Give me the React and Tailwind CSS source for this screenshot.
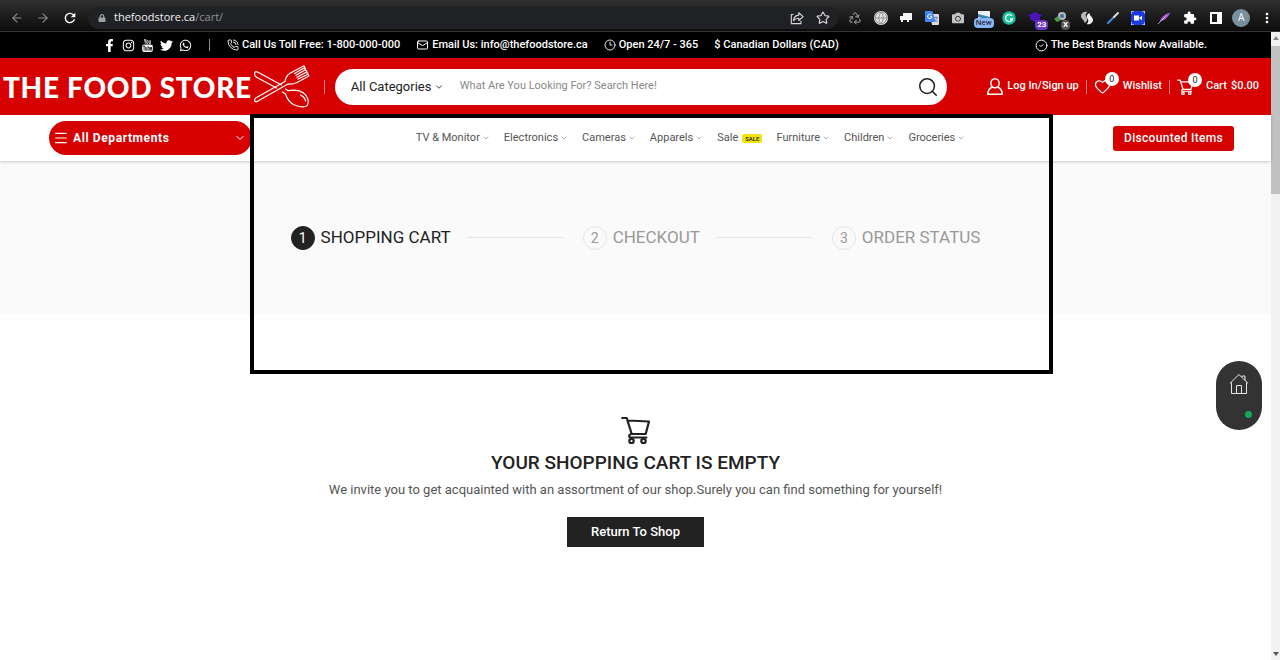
import {
  ArrowLeft,
  ArrowRight,
  ChevronDown,
  CircleCheck,
  Clock3,
  Globe,
  Heart,
  Mail,
  Menu,
  PhoneCall,
  Recycle,
  Search,
  Star,
} from "lucide-react";
import { FaCamera, FaFacebookF, FaInstagram, FaLock, FaTwitter, FaWhatsapp } from "react-icons/fa";
import { MdExtension, MdMoreVert, MdRefresh } from "react-icons/md";
import { TfiYoutube } from "react-icons/tfi";

const SOCIALS = [
  { label: "Facebook", Icon: FaFacebookF },
  { label: "Instagram", Icon: FaInstagram },
  { label: "YouTube", Icon: TfiYoutube },
  { label: "Twitter", Icon: FaTwitter },
  { label: "WhatsApp", Icon: FaWhatsapp },
];

const MENU = [
  { label: "TV & Monitor" },
  { label: "Electronics" },
  { label: "Cameras" },
  { label: "Apparels" },
  { label: "Sale", badge: "SALE" },
  { label: "Furniture" },
  { label: "Children" },
  { label: "Groceries" },
];

const STEPS = ["SHOPPING CART", "CHECKOUT", "ORDER STATUS"];

function ShareIcon() {
  return (
    <svg viewBox="0 0 16 16" className="w-3.5 h-3.5" fill="none" stroke="currentColor" strokeWidth="1.3" strokeLinejoin="round">
      <path d="M4 4H1.5v10.5h11V11" />
      <path d="M10 2l5 4.5-5 4.300V8.300C7.500 8.300 5.500 9 4 11c.3-3.500 2.500-6 6-6.300z" />
    </svg>
  );
}

function CartIcon({ className }) {
  return (
    <svg viewBox="0 0 30 28" className={className} fill="none" stroke="currentColor" strokeWidth="2.2" strokeLinecap="round" strokeLinejoin="round">
      <path d="M1.200 2h4.500l5 16h14L28 5.500 7 4.500" />
      <path d="M10.700 18c-3 0-3.500 3.500-.7 3.500h15.500" />
      <circle cx="10.500" cy="25" r="2.200" />
      <circle cx="22.500" cy="25" r="2.200" />
    </svg>
  );
}

function UserIcon() {
  return (
    <svg viewBox="0 0 16 17" className="w-4 h-[17px]" fill="none" stroke="currentColor" strokeWidth="1.500" strokeLinejoin="round">
      <ellipse cx="8" cy="5.300" rx="4.200" ry="4.500" />
      <path d="M5.500 9C2.500 10.300.8 12.500.8 16.200h14.400c0-3.700-1.700-5.900-4.700-7.200" />
    </svg>
  );
}

function HouseIcon() {
  return (
    <svg viewBox="0 0 20 22" className="w-5 h-[22px]" fill="none" stroke="#e8e8e8" strokeWidth="1">
      <path d="M.8 10.500L10 1.500l9.200 9" />
      <path d="M2.500 9.500v11h15v-11" />
      <path d="M7.500 20.500v-8h5v8M13 4V3h3v4.500" />
    </svg>
  );
}

// Knife-and-spoon mark beside the store name
function CutleryIcon() {
  return (
    <svg viewBox="0 0 56 44" className="w-14 h-11 shrink-0" fill="none" stroke="#fff" strokeWidth="1.200" strokeLinejoin="round" strokeLinecap="round">
      <path d="M22.500 23L3 12.500C1 11.500.3 9 .8 7.500 1.500 6 3 6.700 4 7.300L27.500 20" />
      <path d="M.8 34.500c-.5 2 .7 3 2.700 1.800L34 19c3 .3 6 0 9-1.500l11-6c1.500-1 .5-2.500-1-1.800L44 14M31 16.500L2.500 32.500C1.500 33 1 33.500.8 34.500M31 16.500c.5-3.500 2-6.500 5-8.300l13-7c1.400-.7 2.300.8 1 1.700L40.500 8.500M50 3.200c1.400-.5 2.200 1 .9 1.800L42 10.300M51.200 5.500c1.400-.5 2.200 1 .9 1.800L43 12.300M52.200 7.700c1.400-.5 2.200 1 .9 1.800" />
      <path d="M28.500 27l3 2c1.500 5 4.500 9 9 11 5 2.300 11.500 2.500 13 0 1.800-3.500.5-8.500-4-12-4.500-3.300-10.500-3.300-15.500-2.300l-2.500-1.700" />
      <path d="M46.500 30c3 1.500 4.700 3.500 5 6" />
    </svg>
  );
}

function SwirlIcon() {
  return (
    <svg viewBox="0 0 14 14" className="w-3.5 h-3.5">
      <path d="M7.500 1C4 0 1 2.200 1 5c0 3.500 3.500 3.500 3.500 7 2.500-1 3.500-3.500 2-5.700C5 4.500 5.500 2.300 7.500 1z" fill="#b9b9b9" />
      <path d="M6.500 13c3.500 1 6.500-1.200 6.500-4 0-3.500-3.500-3.500-3.500-7C7 3 6 5.500 7.500 7.700c1.500 1.800 1 4-1 5.300z" fill="#f1f1f1" />
    </svg>
  );
}

function TranslateIcon() {
  return (
    <svg viewBox="0 0 14 14" className="w-3.5 h-3.5">
      <path d="M5 3h8a1 1 0 011 1v9a1 1 0 01-1 1H7z" fill="#d8dde3" />
      <path d="M9 6.500h4M11 5.500v1M12.500 6.500c-.5 2-1.500 3-3 4M9.700 8c.8 1.500 1.800 2.300 3 3" stroke="#607d8b" strokeWidth=".8" fill="none" />
      <path d="M1 0h6.500l3 11H1a1 1 0 01-1-1V1a1 1 0 011-1z" fill="#4285f4" />
      <path d="M6.500 4A2.200 2.200 0 107 5.800H5" stroke="#fff" strokeWidth="1" fill="none" />
    </svg>
  );
}

function ExtensionBadge({ children, className }) {
  return (
    <span className={`absolute top-3 left-1/2 px-0.5 rounded-sm text-[8px] leading-[10px] font-bold ${className}`}>{children}</span>
  );
}

function BrowserBar() {
  return (
    <div className="flex items-center h-8 pt-1 bg-linear-to-b from-[#303030] to-[#0c0c0c] border-b border-[#333] text-[#d6d6d6]">
      <div className="flex items-center gap-3 pl-2.5 pr-2.5">
        <button aria-label="Back" className="text-[#8a8a8a]"><ArrowLeft className="w-3.5 h-3.5" /></button>
        <button aria-label="Forward" className="text-[#8a8a8a]"><ArrowRight className="w-3.5 h-3.5" /></button>
        <button aria-label="Reload" className="text-white"><MdRefresh className="w-4 h-4" /></button>
      </div>
      <div className="flex flex-1 items-center h-[22px] pl-2.5 pr-2 mr-1 rounded-full bg-[#202124]">
        <FaLock className="w-2 h-2 text-[#9aa0a6]" />
        <span className="flex-1 pl-2 font-['Open_Sans',sans-serif] text-[11px] text-[#8f9398]">
          <span className="text-[#f1f1f1]">thefoodstore.ca</span>/cart/
        </span>
        <button aria-label="Share" className="mr-3"><ShareIcon /></button>
        <button aria-label="Bookmark"><Star className="w-3.5 h-3.5" /></button>
      </div>
      <div className="flex w-[438px] *:flex *:flex-1 *:h-5 *:items-center *:justify-center *:relative">
        <span><Recycle className="w-3.5 h-3.5 text-[#888]" /></span>
        <span><Globe className="w-3.5 h-3.5 rounded-full bg-[#e4e4e4] text-[#888]" strokeWidth={1.5} /></span>
        <span>
          <svg viewBox="0 0 12 10" className="w-3 h-2.5" fill="#f5f5f5"><path d="M3 0h9v6H3zM0 3h3v3h9v1H9v2H7V7H3v2H1V7H0z" /></svg>
        </span>
        <span><TranslateIcon /></span>
        <span><FaCamera className="w-3 h-3 text-[#c4c4c4]" /></span>
        <span>
          <svg viewBox="0 0 14 14" className="w-3.5 h-3.5"><path d="M1 0h12v14H1z" fill="#e8f0f5" /><path d="M1 3l12 3v3L1 6z" fill="#3b83b5" /></svg>
          <span className="absolute top-2.5 px-0.5 rounded-sm bg-[#8ab4f8] text-[8px] leading-[10px] text-[#111]">New</span>
        </span>
        <span>
          <svg viewBox="0 0 14 14" className="w-3.5 h-3.5"><circle cx="7" cy="7" r="6.700" fill="#15c39a" /><path d="M10 5a3.500 3.500 0 10.500 3H8" stroke="#fff" strokeWidth="1.300" fill="none" /></svg>
        </span>
        <span>
          <svg viewBox="0 0 14 14" className="w-3.5 h-3.5"><path d="M7 1l7 3.500-2 1v3L7 11 2 8.500v-3l-2-1z" fill="#4b14b8" /></svg>
          <ExtensionBadge className="bg-[#6a35c9] text-white">23</ExtensionBadge>
        </span>
        <span>
          <svg viewBox="0 0 14 14" className="w-3.5 h-3.5"><circle cx="8" cy="5" r="4" fill="#b9b9b9" /><circle cx="8" cy="5" r="2" fill="#3b6ea8" /><path d="M0 8l4-3 3 4-4 2z" fill="#4c9a4f" /></svg>
          <ExtensionBadge className="bg-[#555] text-white">X</ExtensionBadge>
        </span>
        <span><SwirlIcon /></span>
        <span>
          <svg viewBox="0 0 14 14" className="w-3.5 h-3.5" strokeLinecap="round"><path d="M2 12l6-6" stroke="#4a8de0" strokeWidth="2" /><path d="M8 6l4-4" stroke="#ddd" strokeWidth="2" /></svg>
        </span>
        <span>
          <svg viewBox="0 0 14 14" className="w-3.5 h-3.5"><path d="M0 0h14v14H0z" fill="#1a3be0" /><path d="M0 3V0h3M11 0h3v3M14 11v3h-3M3 14H0v-3" stroke="#fff" fill="none" /><path d="M3 4.500h5v5H3zM8.500 6.500L11 4.800v4.400L8.500 7.500z" fill="#fff" /></svg>
        </span>
        <span>
          <svg viewBox="0 0 14 14" className="w-3.5 h-3.5"><path d="M2.500 10.500C4 6 7.500 3 13 1.500 11.500 6 8 9.500 2.500 10.500z" fill="#a05cc4" /><path d="M1 13L10 4" stroke="#d9b3ee" strokeWidth=".8" /></svg>
        </span>
        <span><MdExtension className="w-3.5 h-3.5 text-white" /></span>
        <span>
          <svg viewBox="0 0 12 12" className="w-3 h-3"><path d="M1 1h10v10H1z" stroke="#fff" strokeWidth="2" fill="none" /><path d="M7 1h4v10H7z" fill="#fff" /></svg>
        </span>
        <span><span className="w-[18px] h-[18px] rounded-full bg-[#78909c] text-center text-[10px] leading-[18px] text-white">A</span></span>
        <span><MdMoreVert className="w-4 h-4 text-white" /></span>
      </div>
    </div>
  );
}

function TopBar() {
  return (
    <div className="flex items-center h-[26px] pl-[103px] pr-16 bg-black text-white text-[11px] font-medium">
      <div className="flex gap-1.5">
        {SOCIALS.map(({ label, Icon }) => (
          <a key={label} href="#" aria-label={label}><Icon className="w-[13px] h-[13px]" /></a>
        ))}
      </div>
      <span className="w-px h-3 mx-[17px] bg-[#888]" />
      <div className="flex gap-4">
        <span className="flex items-center gap-[3px]"><PhoneCall className="w-3 h-3" strokeWidth={1.8} />Call Us Toll Free: 1-800-000-000</span>
        <span className="flex items-center gap-[3px]"><Mail className="w-[13px] h-3" strokeWidth={2} />Email Us: info@thefoodstore.ca</span>
        <span className="flex items-center gap-[3px]"><Clock3 className="w-3 h-3" strokeWidth={1.8} />Open 24/7 - 365</span>
        <span>$ Canadian Dollars (CAD)</span>
      </div>
      <span className="flex items-center gap-[3px] ml-auto"><CircleCheck className="w-[13px] h-[13px]" strokeWidth={1.8} />The Best Brands Now Available.</span>
    </div>
  );
}

function CountBadge({ children }) {
  return (
    <span className="absolute -top-1.5 left-[11px] w-3.5 h-3.5 rounded-full bg-white text-center text-[9px] leading-[14px] font-normal text-[#222]">{children}</span>
  );
}

function Header() {
  return (
    <header className="flex items-center h-[57px] pl-[3px] pr-3 bg-[#d60000] text-white">
      <a href="#" className="flex items-center gap-0.5">
        <span className="font-['Lato',sans-serif] text-[28px] leading-8 font-black tracking-wide whitespace-nowrap">THE FOOD STORE</span>
        <CutleryIcon />
      </a>
      <span className="w-px h-3.5 ml-3.5 mr-2.5 bg-[#e98080]" />
      <form className="flex flex-1 items-center h-9 pl-4 pr-2 rounded-full bg-white text-[#222]">
        <div className="relative flex items-center">
          <select aria-label="Category" className="appearance-none pr-3 text-[13px] text-[#222] outline-none">
            <option>All Categories</option>
          </select>
          <ChevronDown className="absolute right-0 w-2.5 h-2.5 pointer-events-none" strokeWidth={2} />
        </div>
        <input
          type="search"
          aria-label="Search products"
          placeholder="What Are You Looking For? Search Here!"
          className="flex-1 ml-4 text-[11px] outline-none placeholder:text-[#888]"
        />
        <button type="button" aria-label="Search"><Search className="w-[22px] h-[22px]" strokeWidth={1.7} /></button>
      </form>
      <div className="flex items-center ml-10 text-[11px] font-medium">
        <a href="#" className="flex items-center gap-1"><UserIcon />Log In/Sign up</a>
        <span className="w-px h-3.5 mx-[7px] bg-[#e98080]" />
        <a href="#" className="flex items-center gap-3">
          <span className="relative"><Heart className="w-[17px] h-[17px]" strokeWidth={1.8} /><CountBadge>0</CountBadge></span>
          Wishlist
        </a>
        <span className="w-px h-3.5 mx-[7px] bg-[#e98080]" />
        <a href="#" className="flex items-center gap-3">
          <span className="relative"><CartIcon className="w-[17px] h-4" /><CountBadge>0</CountBadge></span>
          <span className="flex gap-1">Cart <span>$0.00</span></span>
        </a>
      </div>
    </header>
  );
}

function NavBar() {
  return (
    <div className="relative flex items-center h-[46px] pl-[49px] pr-[37px] bg-white shadow-[0_1px_3px_rgba(0,0,0,0.2)]">
      <button className="flex items-center w-[203px] h-[34px] pl-1 pr-1.5 rounded-full bg-[#d60000] text-white text-xs font-bold tracking-wider">
        <Menu className="w-4 h-4 mr-1" strokeWidth={1.8} />
        All Departments
        <ChevronDown className="w-3 h-3 ml-auto" />
      </button>
      <nav className="flex flex-1 justify-center gap-3.5 pl-4 text-[11px] text-[#555]">
        {MENU.map((item) => (
          <a key={item.label} href="#" className="flex items-center gap-0.5">
            {item.label}
            {item.badge ? (
              <span className="px-[3px] ml-0.5 rounded-xs bg-[#f2e30f] text-[6px] leading-[9px] font-medium text-[#222]">{item.badge}</span>
            ) : (
              <ChevronDown className="w-2 h-2 text-[#888]" />
            )}
          </a>
        ))}
      </nav>
      <a href="#" className="px-[11px] py-0.5 rounded-[3px] bg-[#d60000] text-xs leading-[21px] font-medium tracking-wide text-white">Discounted Items</a>
    </div>
  );
}

function CheckoutSteps() {
  return (
    <ol className="flex items-center justify-center h-[153px] bg-[#fafafa]">
      {STEPS.map((step, i) => (
        <li key={step} className={`flex items-center gap-1.5 text-[17px] ${i === 0 ? "text-[#222]" : "text-[#999]"}`}>
          {i > 0 && <span className="w-24 h-px ml-4 mr-3.5 bg-[#e6e6e6]" />}
          <span className={`w-6 h-6 rounded-full border text-center text-sm leading-[22px] ${i === 0 ? "border-[#222] bg-[#222] text-white" : "border-[#e6e6e6]"}`}>
            {i + 1}
          </span>
          {step}
        </li>
      ))}
    </ol>
  );
}

function EmptyCart() {
  return (
    <section className="flex flex-col items-center pt-[102px] text-center">
      <CartIcon className="w-[30px] h-7 text-[#222]" />
      <h1 className="mt-1.5 text-[19px] leading-[26px] font-medium text-[#222]">YOUR SHOPPING CART IS EMPTY</h1>
      <p className="mt-1 text-[13px] leading-5 text-[#555]">
        We invite you to get acquainted with an assortment of our shop.Surely you can find something for yourself!
      </p>
      <a href="#" className="mt-[17px] px-6 bg-[#222] text-[13px] leading-[30px] font-medium text-white">Return To Shop</a>
    </section>
  );
}

function Scrollbar() {
  return (
    <div aria-hidden="true" className="flex flex-col items-center w-[9px] pt-1 pb-1 bg-[#f1f1f1]">
      <svg viewBox="0 0 6 4" className="w-1.5 h-1" fill="#888"><path d="M3 0l3 4H0z" /></svg>
      <span className="w-full h-[148px] mt-1.5 bg-[#c1c1c1]" />
      <svg viewBox="0 0 6 4" className="w-1.5 h-1 mt-auto" fill="#555"><path d="M0 0h6L3 4z" /></svg>
    </div>
  );
}

export default function App() {
  return (
    <div className="flex flex-col min-h-screen bg-white font-['Roboto',sans-serif]">
      <BrowserBar />
      <div className="flex flex-1">
        <div className="relative flex-1 min-w-0">
          <TopBar />
          <Header />
          <NavBar />
          <main>
            <CheckoutSteps />
            <EmptyCart />
          </main>

          {/* highlight frame around the menu and checkout steps */}
          <div className="absolute top-[82px] left-[250px] right-[218px] h-[260px] border-4 border-black pointer-events-none" />

          <a href="#" aria-label="Home" className="absolute top-[329px] right-[9px] flex flex-col items-center w-[46px] h-[69px] pt-3 rounded-full bg-[#333]">
            <HouseIcon />
            <span className="absolute right-2.5 bottom-3 w-[7px] h-[7px] rounded-full bg-[#14a85b]" />
          </a>
        </div>
        <Scrollbar />
      </div>
    </div>
  );
}
